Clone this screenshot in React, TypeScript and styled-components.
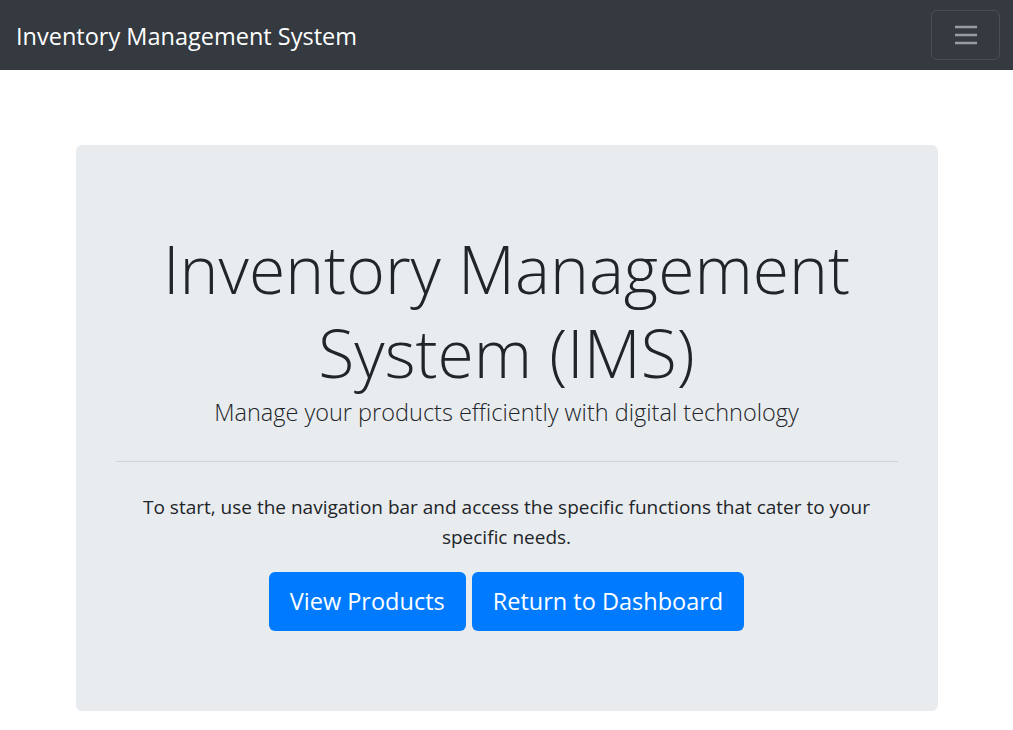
import React from "react";
import styled, { createGlobalStyle } from "styled-components";

const Global = createGlobalStyle`
  html, body { margin: 0; padding: 0; background: #fff; }
  body {
    font-family: "Open Sans", "Noto Sans", "Liberation Sans", sans-serif;
    color: #212529;
    font-size: 19px;
    line-height: 1.5;
  }
  * { box-sizing: border-box; }
`;

const Navbar = styled.nav`
  height: 70px;
  background: #343a40;
  display: flex;
  align-items: center;
  justify-content: space-between;
  padding: 0 13px 0 16px;
`;

const Brand = styled.a`
  color: #fff;
  font-size: 23.5px;
  line-height: 36px;
  margin-top: 2px;
  text-decoration: none;
  white-space: nowrap;
`;

const Toggler = styled.button`
  width: 69px;
  height: 50px;
  border: 1px solid rgba(255, 255, 255, 0.1);
  border-radius: 6px;
  background: transparent;
  display: flex;
  align-items: center;
  justify-content: center;
  padding: 0;
`;

const Container = styled.main`
  width: 900px;
  margin: 0 auto;
  padding: 75px 19px 0;
`;

const Jumbotron = styled.section`
  background: #e9ecef;
  border-radius: 6px;
  padding: 81px 40px 80px;
  text-align: center;
`;

const Title = styled.h1`
  margin: 0;
  font-size: 66px;
  font-weight: 300;
  line-height: 84px;
`;

const Lead = styled.p`
  margin: 0;
  font-size: 23.5px;
  font-weight: 300;
  line-height: 37px;
`;

const Rule = styled.hr`
  margin: 30px 0 30px;
  border: 0;
  border-top: 1px solid rgba(0, 0, 0, 0.1);
`;

const Text = styled.p`
  margin: 0 0 20px;
  font-size: 19px;
  line-height: 30px;
  padding: 0;
`;

const Actions = styled.div`
  display: flex;
  justify-content: center;
  gap: 6px;
`;

const Button = styled.a`
  display: inline-block;
  background: #007bff;
  color: #fff;
  border-radius: 6px;
  font-size: 23.5px;
  line-height: 37px;
  padding: 11px 21px;
  text-decoration: none;
`;

export default function App() {
  return (
    <>
      <Global />
      <Navbar>
        <Brand href="#">Inventory Management System</Brand>
        <Toggler aria-label="Toggle navigation">
          <svg width="30" height="30" viewBox="0 0 30 30">
            <path
              d="M4 7h22M4 15h22M4 23h22"
              stroke="rgba(255,255,255,0.5)"
              strokeWidth="2.5"
              strokeLinecap="butt"
            />
          </svg>
        </Toggler>
      </Navbar>
      <Container>
        <Jumbotron>
          <Title>Inventory Management System (IMS)</Title>
          <Lead>Manage your products efficiently with digital technology</Lead>
          <Rule />
          <Text>
            To start, use the navigation bar and access the specific functions
            that cater to your specific needs.
          </Text>
          <Actions>
            <Button href="#">View Products</Button>
            <Button href="#">Return to Dashboard</Button>
          </Actions>
        </Jumbotron>
      </Container>
    </>
  );
}
